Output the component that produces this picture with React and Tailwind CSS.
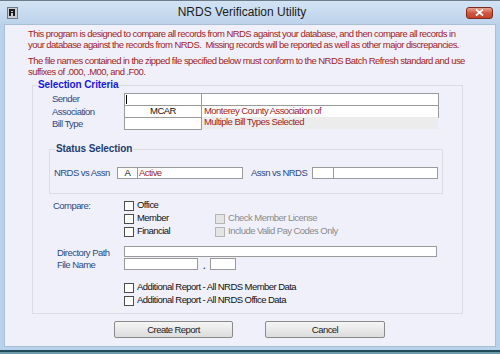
import React from "react";

const font = { fontFamily: '"Liberation Sans", Arial, sans-serif' };

function Check({ disabled, label }) {
  return (
    <div className="flex items-center h-[13px]">
      <div
        className={
          disabled
            ? "w-[10px] h-[10px] border border-[#b5b5b5] bg-[#e4e4e4]"
            : "w-[10px] h-[10px] border border-[#4d4d4d] bg-white"
        }
      />
      <span
        className={
          disabled
            ? "ml-[3px] text-[#8a8a8a]"
            : "ml-[3px] text-[#111]"
        }
      >
        {label}
      </span>
    </div>
  );
}

function Label({ children, className = "" }) {
  return <span className={`text-[#2a4a84] ${className}`}>{children}</span>;
}

export default function App() {
  return (
    <div
      style={font}
      className="w-[500px] h-[354px] flex flex-col bg-[#b9d1ea] border-t border-[#6d7c8c] text-[9.5px] tracking-[-0.55px] leading-[10.5px] overflow-hidden"
    >
      {/* TITLE BAR */}
      <div className="h-[23px] flex items-center pl-[7px] pr-[7px] bg-gradient-to-b from-[#d3e3f4] to-[#bcd3eb]">
        <div className="w-[11px] h-[12px] bg-[#c9ced6] border border-[#6f7884] flex items-center justify-center">
          <svg width="7" height="7" viewBox="0 0 7 7">
            <rect x="0" y="0" width="2" height="7" fill="#1a1a1a" />
            <rect x="2" y="0" width="4" height="2" fill="#1a1a1a" />
            <rect x="4" y="2" width="2" height="2" fill="#1a1a1a" />
            <rect x="2" y="3" width="3" height="1" fill="#1a1a1a" />
            <rect x="4" y="4" width="2" height="3" fill="#1a1a1a" />
          </svg>
        </div>
        <div className="flex-1 text-center text-[12px] tracking-normal text-[#1b1b1b]">
          NRDS Verification Utility
        </div>
        <div className="w-[27px] h-[12px] rounded-[3px] border border-[#7b2a1e] bg-gradient-to-b from-[#e9a08f] via-[#d2563d] to-[#c1442c] flex items-center justify-center">
          <svg width="9" height="7" viewBox="0 0 9 7">
            <path d="M1 0.5 L8 6.5 M8 0.5 L1 6.5" stroke="#fff" strokeWidth="1.8" />
          </svg>
        </div>
      </div>

      {/* CLIENT AREA */}
      <div className="mx-[4px] h-[323px] bg-[#f0f0fb] border border-[#a9bfd8] pl-[23px] pt-[4px]">
        <div className="text-[#a01c1c]">
          <p>
            This program is designed to compare all records from NRDS against
            your database, and then compare all records in
          </p>
          <p>
            your database against the records from NRDS.&nbsp; Missing records
            will be reported as well as other major discrepancies.
          </p>
          <p className="mt-[6px]">
            The file names contained in the zipped file specified below must
            conform to the NRDS Batch Refresh standard and use
          </p>
          <p>suffixes of .000, .M00, and .F00.</p>
        </div>

        <fieldset className="ml-[4px] mt-[2px] w-[431px] border border-[#dcdce4] pb-[6px]">
          <legend className="ml-[4px] px-[1px] font-bold text-[10px] text-[#1717e6] tracking-[-0.1px] leading-[12px]">
            Selection Criteria
          </legend>

          {/* criteria rows */}
          <div className="pl-[19px] pt-[2px]">
            <div className="flex items-center h-[13px]">
              <Label className="w-[72px]">Sender</Label>
              <div className="w-[78px] h-[13px] border border-[#9a9a9a] bg-white flex items-center pl-[1px]">
                <div className="w-px h-[9px] bg-black" />
              </div>
              <div className="w-[237px] h-[13px] border border-l-0 border-[#9a9a9a] bg-white" />
            </div>
            <div className="flex items-center h-[13px] -mt-px">
              <Label className="w-[72px] pt-[1px]">Association</Label>
              <div className="w-[78px] h-[13px] border border-[#9a9a9a] bg-white text-center text-[#111]">
                MCAR
              </div>
              <div className="w-[237px] h-[13px] border border-l-0 border-[#9a9a9a] bg-white pl-[2px] text-[#a01c1c]">
                Monterey County Association of
              </div>
            </div>
            <div className="flex items-center h-[13px] -mt-px">
              <Label className="w-[72px] pt-[2px]">Bill Type</Label>
              <div className="w-[78px] h-[13px] border border-[#9a9a9a] bg-white" />
              <div className="w-[236px] h-[12px] mb-px bg-[#ececec] pl-[2px] text-[#a01c1c]">
                Multiple Bill Types Selected
              </div>
            </div>
          </div>

          {/* status selection */}
          <fieldset className="ml-[16px] mt-[13px] w-[394px] border border-[#dcdce4] pt-[12px] pb-[14px]">
            <legend className="ml-[5px] px-[1px] font-bold text-[10px] text-[#1d3d70] tracking-[-0.1px] leading-[12px]">
              Status Selection
            </legend>
            <div className="flex items-center h-[12px] pl-[4px]">
              <Label className="w-[63px]">NRDS vs Assn</Label>
              <div className="w-[126px] h-[12px] border border-[#9a9a9a] bg-white flex">
                <div className="w-[20px] border-r border-[#9a9a9a] text-center text-[#111]">
                  A
                </div>
                <div className="pl-[1px] text-[#a01c1c]">Active</div>
              </div>
              <Label className="ml-[8px] w-[61px]">Assn vs NRDS</Label>
              <div className="w-[126px] h-[12px] border border-[#9a9a9a] bg-white flex">
                <div className="w-[21px] border-r border-[#9a9a9a]" />
              </div>
            </div>
          </fieldset>

          {/* compare */}
          <div className="flex pl-[20px] mt-[5px]">
            <Label className="w-[71px] leading-[13px]">Compare:</Label>
            <div className="flex flex-col">
              <Check label="Office" />
              <Check label="Member" />
              <Check label="Financial" />
            </div>
            <div className="flex flex-col ml-[45px]">
              <div className="h-[13px]" />
              <Check disabled label="Check Member License" />
              <Check disabled label="Include Valid Pay Codes Only" />
            </div>
          </div>

          {/* paths */}
          <div className="flex pl-[24px] mt-[8px]">
            <div className="w-[67px] flex flex-col">
              <Label className="h-[12px] leading-[13px]">Directory Path</Label>
              <Label className="h-[12px] leading-[14px]">File Name</Label>
            </div>
            <div className="flex flex-col gap-px">
              <div className="w-[313px] h-[11px] border border-[#9a9a9a] bg-white" />
              <div className="flex items-end">
                <div className="w-[74px] h-[12px] border border-[#9a9a9a] bg-white" />
                <span className="w-[12px] text-center font-bold text-[#27467e] leading-[8px]">
                  .
                </span>
                <div className="w-[26px] h-[12px] border border-[#9a9a9a] bg-white" />
              </div>
            </div>
          </div>

          {/* additional */}
          <div className="flex flex-col pl-[91px] mt-[11px]">
            <Check label="Additional Report - All NRDS Member Data" />
            <Check label="Additional Report - All NRDS Office Data" />
          </div>
        </fieldset>

        {/* buttons */}
        <div className="flex ml-[86px] mt-[7px] gap-[32px] text-[#1b1b1b]">
          <button className="w-[119px] h-[17px] rounded-[2px] border border-[#8a8a8a] bg-gradient-to-b from-[#f6f6f6] to-[#dcdcdc] leading-[15px]">
            Create Report
          </button>
          <button className="w-[120px] h-[17px] rounded-[2px] border border-[#8a8a8a] bg-gradient-to-b from-[#f6f6f6] to-[#dcdcdc] leading-[15px]">
            Cancel
          </button>
        </div>
      </div>

      {/* bottom frame edge */}
      <div className="mt-[3px] h-[2px] bg-[#1e4a5a]" />
      <div className="flex-1 bg-[#6f9aaa]" />
    </div>
  );
}
